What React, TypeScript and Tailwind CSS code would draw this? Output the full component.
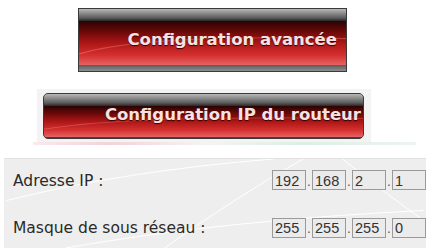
function RedButton({
  label,
  className,
  redClass,
  bottomClass,
}: {
  label: string;
  className: string;
  redClass: string;
  bottomClass: string;
}) {
  return (
    <div className={`flex flex-col overflow-hidden border border-[#3a3a3a] bg-[#4a4a4a] ${className}`}>
      <div className="h-[12px] shrink-0 bg-[linear-gradient(to_bottom,#b8b8b8_0%,#8c8c8c_35%,#5a5a5a_75%,#262626_100%)]" />
      <div
        className={`relative flex flex-1 items-start justify-end bg-[linear-gradient(to_bottom,#2a0303_0%,#650808_22%,#ad1616_50%,#d63030_78%,#e56363_100%)] ${redClass}`}
      >
        <svg className="absolute inset-0 h-full w-full" preserveAspectRatio="none" viewBox="0 0 100 40">
          <path d="M0 30 Q25 12 100 16" stroke="#ff9c9c" strokeOpacity="0.35" strokeWidth="1" fill="none" />
        </svg>
        <span className="relative font-['DejaVu_Sans',sans-serif] text-[16.5px] leading-none font-bold whitespace-nowrap text-[#f6e2e2] [text-shadow:0_1px_1px_#3a0000]">
          {label}
        </span>
      </div>
      <div className={`shrink-0 ${bottomClass}`} />
    </div>
  );
}

function IpField({ parts }: { parts: string[] }) {
  return (
    <div className="flex items-baseline">
      {parts.map((p, i) => (
        <div key={i} className="flex items-baseline">
          {i > 0 && <span className="w-[6px] text-center text-[12px] text-[#555]">.</span>}
          <div className="flex h-[20px] w-[34px] shrink-0 items-end border border-[#9a9a9a] bg-[#ebebeb] pb-[1px] pl-[2px] font-['Liberation_Sans',sans-serif] text-[14.5px] leading-none text-[#333]">
            {p}
          </div>
        </div>
      ))}
    </div>
  );
}

export default function App() {
  return (
    <div className="relative h-[248px] w-[426px] overflow-hidden bg-white font-['DejaVu_Sans',sans-serif]">
      <div className="pt-[8px] pl-[78px]">
        <RedButton
          label="Configuration avancée"
          className="h-[64px] w-[269px]"
          redClass="pt-[11px] pr-[9px]"
          bottomClass="h-[6px] bg-[linear-gradient(to_bottom,#5a5a5a,#8e8e8e)]"
        />
      </div>

      <div className="mt-[17px] ml-[37px] w-[334px] bg-[#f3f3f3] px-[6px] pt-[4px] pb-[3px]">
        <RedButton
          label="Configuration IP du routeur"
          className="h-[46px] w-[321px] rounded-[5px]"
          redClass="pt-[1px] pr-[2px]"
          bottomClass="h-[1px] bg-[#6a3030]"
        />
      </div>
      <div className="ml-[33px] h-[3px] w-[383px] bg-[linear-gradient(to_right,#fbe9ec,#f4d2d9_20%,#f4f4f4_45%,#dcefe4_70%,#eef4f0_100%)]" />

      <div className="relative mt-[13px] ml-[4px] h-[90px] border-t border-[#e2e2e2] bg-[#eeeeee]">
        <svg className="absolute inset-0 h-full w-full" viewBox="0 0 422 90" fill="none">
          <path d="M0 42 Q120 12 270 0" stroke="#fff" strokeWidth="1" />
          <path d="M160 90 Q230 40 300 0" stroke="#fff" strokeWidth="1" />
          <path d="M60 90 Q220 62 422 52" stroke="#fff" strokeWidth="1" />
          <path d="M340 0 Q390 40 422 62" stroke="#fff" strokeWidth="1" />
        </svg>
        <div className="relative flex flex-col gap-[27px] pt-[11px]">
          <div className="flex items-baseline">
            <span className="w-[283px] pl-[9px] text-[15.5px] leading-none text-[#2a2a2a]">Adresse IP :</span>
            <IpField parts={["192", "168", "2", "1"]} />
          </div>
          <div className="flex items-baseline">
            <span className="w-[283px] pl-[9px] text-[15.5px] leading-none text-[#2a2a2a]">Masque de sous réseau :</span>
            <IpField parts={["255", "255", "255", "0"]} />
          </div>
        </div>
      </div>
    </div>
  );
}
